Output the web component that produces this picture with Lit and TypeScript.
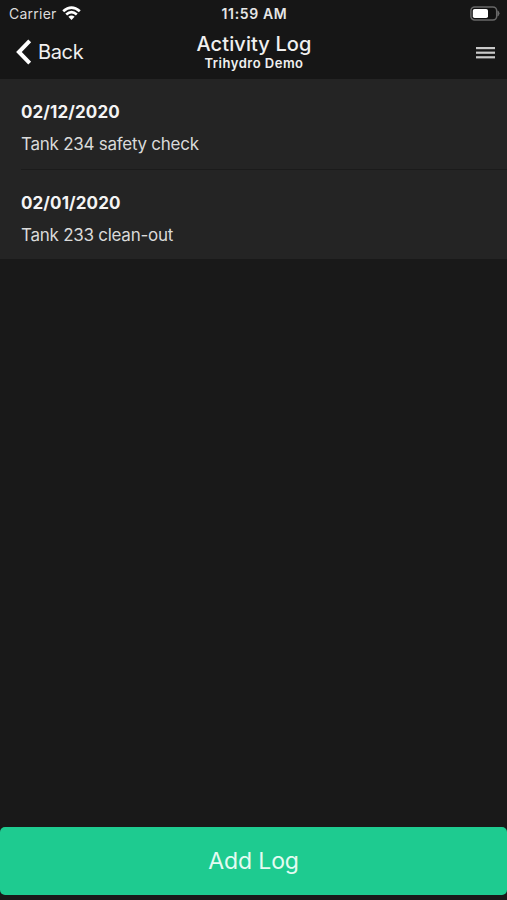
import { LitElement, html, css } from "lit";
import { customElement, property } from "lit/decorators.js";

@customElement("status-bar")
class StatusBar extends LitElement {
  static styles = css`
    :host { display: grid; grid-template-columns: 1fr auto 1fr; align-items: center; height: 27px; padding: 0 7px 0 9px; color: #dcdcdc; }
    .left { display: flex; align-items: center; gap: 5px; }
    .carrier { font-size: 14px; letter-spacing: 0.25px; line-height: 27px; }
    .time { font-size: 14px; font-weight: 600; letter-spacing: 0.65px; color: #e6e6e6; line-height: 27px; }
    .battery { justify-self: end; }
    svg { display: block; }
  `;
  render() {
    return html`
      <div class="left">
        <span class="carrier">Carrier</span>
        <svg width="19" height="15" viewBox="0 0 19 15" fill="none" stroke="#fff" stroke-width="2.7">
          <path d="M1.2 5.3Q9.5 -2.2 17.8 5.3" />
          <path d="M4.2 8.5Q9.5 3.8 14.8 8.5" />
          <path d="M9.5 13.9L6.4 10.8Q9.5 8.4 12.6 10.8Z" fill="#fff" stroke="none" />
        </svg>
      </div>
      <span class="time">11:59 AM</span>
      <svg class="battery" width="31" height="16" viewBox="0 0 31 16">
        <rect x="1.9" y="1" width="25.8" height="13" rx="3.8" fill="#111" stroke="#686868" stroke-width="1.5" />
        <rect x="3.8" y="2.9" width="15.2" height="9.2" rx="1.8" fill="#fff" />
        <path d="M28.8 4.8Q31.8 7.5 28.8 10.2Z" fill="#6c6c6c" stroke="#6c6c6c" stroke-width="0.6" />
      </svg>
    `;
  }
}

@customElement("nav-header")
class NavHeader extends LitElement {
  @property() heading = "";
  @property() subheading = "";
  static styles = css`
    :host { display: grid; grid-template-columns: 1fr auto 1fr; height: 52px; padding: 0 12px 0 15px; color: #f0f0f0; }
    .back { display: flex; align-items: center; gap: 6px; height: 50px; font-size: 20px; letter-spacing: -0.35px; }
    .titles { display: flex; flex-direction: column; align-items: center; padding-top: 6px; margin-left: -2px; }
    .heading { font-size: 20px; font-weight: 550; line-height: 23px; letter-spacing: 0.1px; }
    .sub { font-size: 13px; font-weight: 600; line-height: 14px; letter-spacing: 0.5px; }
    .menu { justify-self: end; margin-top: 19px; }
    svg { display: block; }
  `;
  render() {
    return html`
      <div class="back">
        <svg width="17" height="26" viewBox="0 0 17 26" fill="none" stroke="#fff" stroke-width="4">
          <path d="M14.7 1.8L3.9 13L14.7 24.2" />
        </svg>
        <span class="label">Back</span>
      </div>
      <div class="titles">
        <div class="heading">${this.heading}</div>
        <div class="sub">${this.subheading}</div>
      </div>
      <svg class="menu" width="19" height="14" viewBox="0 0 19 14" fill="#c9c9c9">
        <rect y="1" width="19" height="2.2" />
        <rect y="5.6" width="19" height="2.2" />
        <rect y="10.2" width="19" height="2.2" />
      </svg>
    `;
  }
}

@customElement("log-item")
class LogItem extends LitElement {
  @property() date = "";
  @property() text = "";
  static styles = css`
    :host { display: block; box-sizing: border-box; height: 90px; padding-top: 22px; }
    .date { font-size: 17px; font-weight: 700; line-height: 22px; letter-spacing: 0.1px; color: #f4f4f4; }
    .text { margin-top: 10px; font-size: 17px; line-height: 22px; letter-spacing: -0.26px; color: #dadada; }
  `;
  render() {
    return html`<div class="date">${this.date}</div><div class="text">${this.text}</div>`;
  }
}

@customElement("app-root")
class AppRoot extends LitElement {
  private logs = [
    { date: "02/12/2020", text: "Tank 234 safety check" },
    { date: "02/01/2020", text: "Tank 233 clean-out" },
  ];
  static styles = css`
    :host { display: flex; flex-direction: column; box-sizing: border-box; height: 900px; overflow: hidden; background: #191919; font-family: Inter, "Liberation Sans", sans-serif; }
    .top { background: #161616; }
    .list { height: 180px; padding-left: 21px; background: #242424; }
    .item + .item { border-top: 1px solid #1b1b1b; }
    .spacer { flex: 1; }
    .add { height: 68px; margin-bottom: 5px; border: 0; border-radius: 5px; padding: 0; background: #1ecb90; color: #e4fbf2; font-family: inherit; font-size: 23px; letter-spacing: -0.1px; }
  `;
  render() {
    return html`
      <div class="top">
        <status-bar></status-bar>
        <nav-header heading="Activity Log" subheading="Trihydro Demo"></nav-header>
      </div>
      <div class="list">
        ${this.logs.map((l) => html`<log-item class="item" date=${l.date} text=${l.text}></log-item>`)}
      </div>
      <div class="spacer"></div>
      <button class="add">Add Log</button>
    `;
  }
}
